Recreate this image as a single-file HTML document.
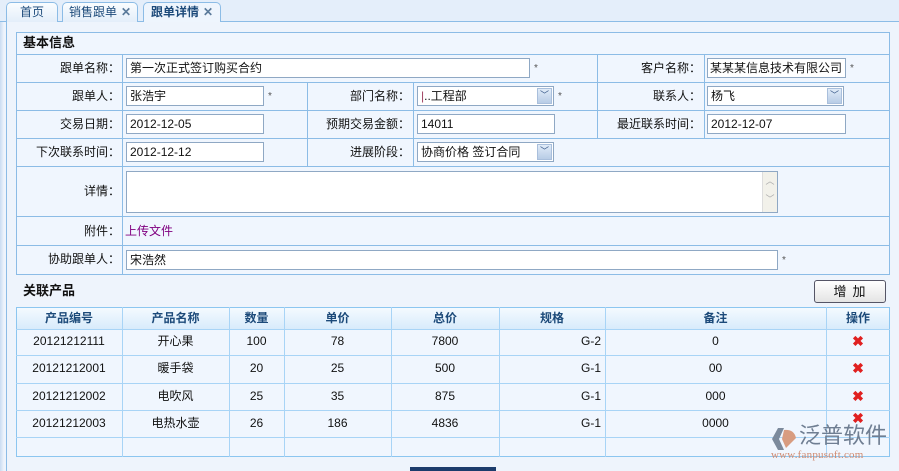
<!DOCTYPE html>
<html><head><meta charset="utf-8"><style>
*{margin:0;padding:0;box-sizing:border-box}
html,body{width:899px;height:471px;overflow:hidden}
body{background:#eef4fc;font-family:"Liberation Sans","Noto Sans CJK SC",sans-serif;font-size:12px;color:#111;position:relative}
.a{position:absolute;white-space:nowrap}
.tabbar{left:0;top:0;width:899px;height:22px;background:#e4eefa;border-bottom:1px solid #8cbce6}
.tab{top:2px;height:21px;border:1px solid #8cbce6;border-bottom:none;border-radius:5px 5px 0 0;background:linear-gradient(#fafdff,#e2edf9);color:#1c4a7a;font-size:12px;line-height:19px;text-align:center}
.tab.act{background:#eef5fd;font-weight:bold;height:22px}
.x{color:#5a7a9a;font-weight:bold;margin-left:4px}
.panel{left:6px;top:22px;width:893px;height:449px;border-left:1px solid #8cbce6;background:#eef4fc}
.hl{height:1px;background:#8cbce6}
.vl{width:1px;background:#8cbce6}
.lbl{text-align:right;line-height:28px}
.in{background:#fff;border:1px solid #8fa8c4;height:20px;line-height:18px;padding-left:3px;white-space:nowrap;overflow:hidden}
.sel .arr{position:absolute;right:1px;top:1px;width:15px;height:16px;background:linear-gradient(#e0ebf8,#b8cce6);border:1px solid #a9bfdc;color:#3a5a8a;font-size:9px;line-height:13px;text-align:center}
.star{color:#555;font-size:10px}
.th{font-weight:bold;color:#1c4a7a;text-align:center;line-height:20px}
.td{text-align:center;line-height:27px}
.del{color:#e02020;font-weight:bold;font-size:14px;text-align:center;line-height:27px}
</style></head><body>
<div class="a tabbar"></div>
<div class="a tab" style="left:6px;width:52px">首页</div>
<div class="a tab" style="left:62px;width:76px">销售跟单<span class="x">✕</span></div>
<div class="a tab act" style="left:143px;width:78px">跟单详情<span class="x">✕</span></div>
<div class="a panel"></div>
<div class="a" style="left:0;top:22px;width:4px;height:449px;background:linear-gradient(90deg,#c9dcf2,#eef4fc)"></div>

<div class="a" style="left:16px;top:32px;width:874px;height:243px;border:1px solid #8cbce6;background:#f0f6fe"></div>
<div class="a" style="left:23px;top:32px;line-height:22px;font-weight:bold;font-size:13px">基本信息</div>
<div class="a hl" style="left:16px;top:54px;width:874px"></div>
<div class="a hl" style="left:16px;top:82px;width:874px"></div>
<div class="a hl" style="left:16px;top:110px;width:874px"></div>
<div class="a hl" style="left:16px;top:138px;width:874px"></div>
<div class="a hl" style="left:16px;top:166px;width:874px"></div>
<div class="a hl" style="left:16px;top:216px;width:874px"></div>
<div class="a hl" style="left:16px;top:245px;width:874px"></div>
<div class="a vl" style="left:122px;top:54px;height:220px"></div>
<div class="a vl" style="left:597px;top:54px;height:28px"></div>
<div class="a vl" style="left:704px;top:54px;height:84px"></div>
<div class="a vl" style="left:307px;top:82px;height:84px"></div>
<div class="a vl" style="left:413px;top:82px;height:84px"></div>
<div class="a vl" style="left:597px;top:82px;height:56px"></div>

<div class="a lbl" style="left:16px;top:54px;width:104px">跟单名称：</div>
<div class="a in" style="left:126px;top:58px;width:404px">第一次正式签订购买合约</div>
<div class="a star" style="left:534px;top:63px">*</div>
<div class="a lbl" style="left:597px;top:54px;width:104px">客户名称：</div>
<div class="a in" style="left:707px;top:58px;width:139px;padding-left:2px">某某某信息技术有限公司</div>
<div class="a star" style="left:850px;top:63px">*</div>

<div class="a lbl" style="left:16px;top:82px;width:104px">跟单人：</div>
<div class="a in" style="left:126px;top:86px;width:138px">张浩宇</div>
<div class="a star" style="left:268px;top:91px">*</div>
<div class="a lbl" style="left:307px;top:82px;width:103px">部门名称：</div>
<div class="a in sel" style="left:417px;top:86px;width:137px"><span style="color:#a04060">|</span>..工程部<span class="arr">﹀</span></div>
<div class="a star" style="left:558px;top:91px">*</div>
<div class="a lbl" style="left:597px;top:82px;width:104px">联系人：</div>
<div class="a in sel" style="left:707px;top:86px;width:137px">杨飞<span class="arr">﹀</span></div>

<div class="a lbl" style="left:16px;top:110px;width:104px">交易日期：</div>
<div class="a in" style="left:126px;top:114px;width:138px">2012-12-05</div>
<div class="a lbl" style="left:307px;top:110px;width:103px">预期交易金额：</div>
<div class="a in" style="left:417px;top:114px;width:138px">14011</div>
<div class="a lbl" style="left:597px;top:110px;width:104px">最近联系时间：</div>
<div class="a in" style="left:707px;top:114px;width:139px">2012-12-07</div>

<div class="a lbl" style="left:16px;top:138px;width:104px">下次联系时间：</div>
<div class="a in" style="left:126px;top:142px;width:138px">2012-12-12</div>
<div class="a lbl" style="left:307px;top:138px;width:103px">进展阶段：</div>
<div class="a in sel" style="left:417px;top:142px;width:137px">协商价格 签订合同<span class="arr">﹀</span></div>

<div class="a lbl" style="left:16px;top:177px;width:104px">详情：</div>
<div class="a in" style="left:126px;top:171px;width:652px;height:42px"></div>
<div class="a" style="left:762px;top:172px;width:15px;height:40px;background:#f2f1ea;border-left:1px solid #ddd;color:#aaa;font-size:9px;text-align:center;line-height:18px">︿<br>﹀</div>

<div class="a lbl" style="left:16px;top:217px;width:104px">附件：</div>
<div class="a" style="left:125px;top:217px;line-height:28px;color:#800080">上传文件</div>

<div class="a lbl" style="left:16px;top:245px;width:104px">协助跟单人：</div>
<div class="a in" style="left:126px;top:250px;width:652px">宋浩然</div>
<div class="a star" style="left:782px;top:255px">*</div>

<div class="a" style="left:23px;top:280px;line-height:22px;font-weight:bold;font-size:13px">关联产品</div>
<div class="a" style="left:814px;top:280px;width:72px;height:23px;border:1px solid #556;border-radius:3px;background:linear-gradient(#fff,#e4e4e4);text-align:center;line-height:21px;letter-spacing:6px;padding-left:5px;font-size:13px">增加</div>

<div class="a" style="left:16px;top:307px;width:874px;height:150px;border:1px solid #8cc6f0;background:#f0f6fe"></div>
<div class="a" style="left:17px;top:308px;width:872px;height:21px;background:linear-gradient(#f4faff,#d8ebfb)"></div>
<div class="a hl" style="left:16px;top:329px;width:874px;background:#a8d4f6"></div>
<div class="a hl" style="left:16px;top:355px;width:874px;background:#a8d4f6"></div>
<div class="a hl" style="left:16px;top:383px;width:874px;background:#a8d4f6"></div>
<div class="a hl" style="left:16px;top:410px;width:874px;background:#a8d4f6"></div>
<div class="a hl" style="left:16px;top:437px;width:874px;background:#a8d4f6"></div>
<div class="a vl" style="left:122px;top:307px;height:150px;background:#a8d4f6"></div>
<div class="a vl" style="left:229px;top:307px;height:150px;background:#a8d4f6"></div>
<div class="a vl" style="left:284px;top:307px;height:150px;background:#a8d4f6"></div>
<div class="a vl" style="left:391px;top:307px;height:150px;background:#a8d4f6"></div>
<div class="a vl" style="left:499px;top:307px;height:150px;background:#a8d4f6"></div>
<div class="a vl" style="left:605px;top:307px;height:150px;background:#a8d4f6"></div>
<div class="a vl" style="left:826px;top:307px;height:150px;background:#a8d4f6"></div>

<div class="a th" style="left:16px;top:308px;width:106px">产品编号</div>
<div class="a th" style="left:122px;top:308px;width:107px">产品名称</div>
<div class="a th" style="left:229px;top:308px;width:55px">数量</div>
<div class="a th" style="left:284px;top:308px;width:107px">单价</div>
<div class="a th" style="left:391px;top:308px;width:108px">总价</div>
<div class="a th" style="left:499px;top:308px;width:106px">规格</div>
<div class="a th" style="left:605px;top:308px;width:221px">备注</div>
<div class="a th" style="left:826px;top:308px;width:64px">操作</div>

<div class="a" style="left:16px;top:328px;width:874px">
<div style="position:relative;height:27px">
<div class="a td" style="left:0;width:106px">20121212111</div><div class="a td" style="left:106px;width:107px">开心果</div><div class="a td" style="left:213px;width:55px">100</div><div class="a td" style="left:268px;width:107px">78</div><div class="a td" style="left:375px;width:108px">7800</div><div class="a td" style="left:483px;width:102px;text-align:right">G-2</div><div class="a td" style="left:589px;width:221px">0</div><div class="a del" style="left:810px;width:64px;top:0">✖</div></div>
<div style="position:relative;height:28px">
<div class="a td" style="left:0;width:106px">20121212001</div><div class="a td" style="left:106px;width:107px">暖手袋</div><div class="a td" style="left:213px;width:55px">20</div><div class="a td" style="left:268px;width:107px">25</div><div class="a td" style="left:375px;width:108px">500</div><div class="a td" style="left:483px;width:102px;text-align:right">G-1</div><div class="a td" style="left:589px;width:221px">00</div><div class="a del" style="left:810px;width:64px;top:0">✖</div></div>
<div style="position:relative;height:27px">
<div class="a td" style="left:0;width:106px">20121212002</div><div class="a td" style="left:106px;width:107px">电吹风</div><div class="a td" style="left:213px;width:55px">25</div><div class="a td" style="left:268px;width:107px">35</div><div class="a td" style="left:375px;width:108px">875</div><div class="a td" style="left:483px;width:102px;text-align:right">G-1</div><div class="a td" style="left:589px;width:221px">000</div><div class="a del" style="left:810px;width:64px;top:0">✖</div></div>
<div style="position:relative;height:27px">
<div class="a td" style="left:0;width:106px">20121212003</div><div class="a td" style="left:106px;width:107px">电热水壶</div><div class="a td" style="left:213px;width:55px">26</div><div class="a td" style="left:268px;width:107px">186</div><div class="a td" style="left:375px;width:108px">4836</div><div class="a td" style="left:483px;width:102px;text-align:right">G-1</div><div class="a td" style="left:589px;width:221px">0000</div><div class="a del" style="left:810px;width:64px;top:-5px">✖</div></div>
</div>

<div class="a" style="left:410px;top:467px;width:86px;height:4px;background:#1c3c6c"></div>

<svg class="a" style="left:770px;top:426px" width="30" height="26" viewBox="0 0 30 26"><path d="M8 2 L2 13 L8 24 L14 24 L9 13 L14 2Z" fill="#7c8a9c"/><path d="M14 4 Q24 3 26 12 L16 22 L12 13Z" fill="#d89c80"/></svg>
<div class="a" style="left:799px;top:423px;font-size:22px;color:#6f7e92;line-height:26px">泛普软件</div>
<div class="a" style="left:771px;top:449px;font-family:'Liberation Serif',serif;font-size:11px;color:#d08a70;letter-spacing:0.2px">www.fanpusoft.com</div>
</body></html>
